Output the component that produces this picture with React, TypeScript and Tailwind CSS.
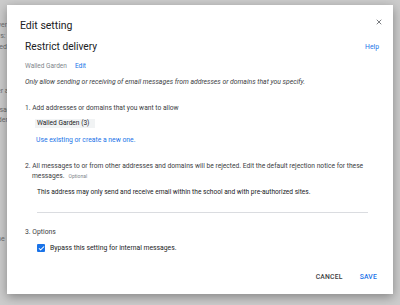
import { Check, X } from 'lucide-react';

const FONT = { fontFamily: 'Roboto, "Liberation Sans", sans-serif' };

// faint page content that peeks out behind the scrim on the left edge
const BG_LINES: { text: string; mt: number }[] = [
  { text: 'Delivering', mt: 21 },
  { text: 'Users:', mt: 3 },
  { text: 'Walled', mt: 3 },
  { text: 'Non', mt: 1 },
  { text: 'Other a', mt: 27 },
  { text: 'Message', mt: 11 },
  { text: 'Sender', mt: 2 },
  { text: 'Name', mt: 111 },
  { text: 'Test message', mt: 62 },
];

function Background() {
  return (
    <div className="absolute inset-0 bg-white">
      <div className="flex flex-col -ml-[14px] text-[7px] leading-[8px] text-[#888]">
        {BG_LINES.map((l, i) => (
          <div key={i} style={{ marginTop: l.mt }}>
            {l.text}
          </div>
        ))}
      </div>
      <div className="absolute inset-0 bg-black/20" />
    </div>
  );
}

export default function App() {
  return (
    <div className="relative w-[400px] h-[305px] overflow-hidden" style={FONT}>
      <Background />

      <div className="absolute left-[7px] top-[5px] w-[386px] h-[289px] bg-white flex flex-col shadow-[0_3px_10px_rgba(0,0,0,0.35)]">
        {/* Header */}
        <div className="flex items-center justify-between pt-[15px] pl-[13px] pr-[10px]">
          <h2 className="text-[10.5px] leading-[12px] text-[#202124]">Edit setting</h2>
          <button className="text-[#5f6368] -mt-[8px]" aria-label="Close">
            <X className="w-[8px] h-[8px]" strokeWidth={2.5} />
          </button>
        </div>

        {/* Body */}
        <div className="flex flex-col pl-[18px] pr-[14px] text-[#3c4043]">
          <div className="flex items-center justify-between mt-[9px]">
            <div className="text-[10.2px] leading-[12px] text-[#202124]">Restrict delivery</div>
            <a className="text-[6.8px] leading-[8px] text-[#1a73e8]">Help</a>
          </div>

          <div className="flex items-center gap-[8px] mt-[9px] text-[6.5px] leading-[8px]">
            <span className="text-[#80868b]">Walled Garden</span>
            <a className="text-[#1a73e8]">Edit</a>
          </div>

          <div className="mt-[8px] text-[6.8px] leading-[8px] italic text-[#3c4043]">
            Only allow sending or receiving of email messages from addresses or domains that you specify.
          </div>

          <div className="mt-[18px] text-[6.7px] leading-[8px]">
            1. Add addresses or domains that you want to allow
          </div>

          <div className="ml-[10px] mt-[7px] self-start h-[9px] pl-[2px] pr-[6px] flex items-center bg-[#f1f3f4] text-[6.6px] text-[#202124]">
            Walled Garden (3)
          </div>

          <a className="ml-[11px] mt-[8px] text-[6.8px] leading-[8px] text-[#1a73e8]">
            Use existing or create a new one.
          </a>

          <div className="mt-[17px] text-[6.7px] leading-[10px] whitespace-nowrap">
            2. All messages to or from other addresses and domains will be rejected. Edit the default rejection notice for these
            <span className="block pl-[7px]">
              messages.
              <span className="ml-[4px] text-[5px] text-[#80868b]">Optional</span>
            </span>
          </div>

          <div className="ml-[12px] mr-[11px] mt-[7px] pb-[16px] border-b border-[#dadce0] text-[6.6px] leading-[8px] text-[#202124]">
            This address may only send and receive email within the school and with pre-authorized sites.
          </div>

          <div className="mt-[15px] text-[6.8px] leading-[8px]">3. Options</div>

          <label className="ml-[12px] mt-[7px] flex items-center gap-[5px] h-[10px] text-[6.8px] text-[#202124]">
            <span className="w-[8px] h-[8px] rounded-[1px] bg-[#1a73e8] flex items-center justify-center">
              <Check className="w-[7px] h-[7px] text-white" strokeWidth={3.5} />
            </span>
            Bypass this setting for internal messages.
          </label>
        </div>

        {/* Footer */}
        <div className="mt-auto flex items-center justify-end gap-[17px] pr-[16px] pb-[13px] text-[6.8px] leading-[8px] font-medium tracking-[0.2px]">
          <button className="text-[#3c4043]">CANCEL</button>
          <button className="text-[#1a73e8]">SAVE</button>
        </div>
      </div>
    </div>
  );
}
